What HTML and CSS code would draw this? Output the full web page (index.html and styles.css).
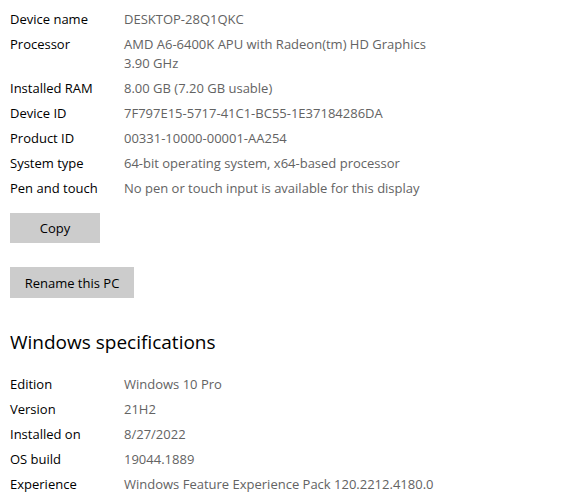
FILE: index.html
```html
<!DOCTYPE html>
<html lang="en">
<head>
  <meta charset="UTF-8" />
  <title>About</title>
  <link rel="stylesheet" href="styles.css">
</head>
<body>
  <div id="about">
    <dl class="spec-list">
      <div class="spec-row"><dt>Device name</dt><dd>DESKTOP-28Q1QKC</dd></div>
      <div class="spec-row"><dt>Processor</dt><dd>AMD A6-6400K APU with Radeon(tm) HD Graphics 3.90 GHz</dd></div>
      <div class="spec-row"><dt>Installed RAM</dt><dd>8.00 GB (7.20 GB usable)</dd></div>
      <div class="spec-row"><dt>Device ID</dt><dd>7F797E15-5717-41C1-BC55-1E37184286DA</dd></div>
      <div class="spec-row"><dt>Product ID</dt><dd>00331-10000-00001-AA254</dd></div>
      <div class="spec-row"><dt>System type</dt><dd>64-bit operating system, x64-based processor</dd></div>
      <div class="spec-row"><dt>Pen and touch</dt><dd>No pen or touch input is available for this display</dd></div>
    </dl>

    <button class="btn btn-copy">Copy</button>
    <button class="btn btn-rename">Rename this PC</button>

    <h2>Windows specifications</h2>

    <dl class="spec-list">
      <div class="spec-row"><dt>Edition</dt><dd>Windows 10 Pro</dd></div>
      <div class="spec-row"><dt>Version</dt><dd>21H2</dd></div>
      <div class="spec-row"><dt>Installed on</dt><dd>8/27/2022</dd></div>
      <div class="spec-row"><dt>OS build</dt><dd>19044.1889</dd></div>
      <div class="spec-row"><dt>Experience</dt><dd>Windows Feature Experience Pack 120.2212.4180.0</dd></div>
    </dl>
  </div>
</body>
</html>
```

FILE: styles.css
```css
html, body {
  margin: 0;
  padding: 0;
  background: #fff;
  overflow: hidden;
}
body {
  font-family: "Open Sans", "Noto Sans", sans-serif;
  font-size: 13px;
  color: #000;
}
#about {
  padding: 4px 10px 0 10px;
}
.spec-list {
  margin: 0;
  padding: 0;
}
.spec-row {
  display: flex;
  margin-top: 6px;
  line-height: 19px;
}
.spec-row dt {
  width: 114px;
  flex: none;
}
.spec-row dd {
  margin: 0;
  max-width: 330px;
  color: #636363;
}
.btn {
  display: block;
  border: none;
  background: #cccccc;
  font-family: inherit;
  font-size: 13px;
  color: #000;
  height: 30px;
  padding: 0;
}
.btn-copy {
  width: 90px;
  margin-top: 15px;
}
.btn-rename {
  width: 124px;
  margin-top: 24px;
  height: 31px;
}
h2 {
  font-weight: normal;
  font-size: 19px;
  margin: 30px 0 19px 0;
  line-height: 28px;
}
```
